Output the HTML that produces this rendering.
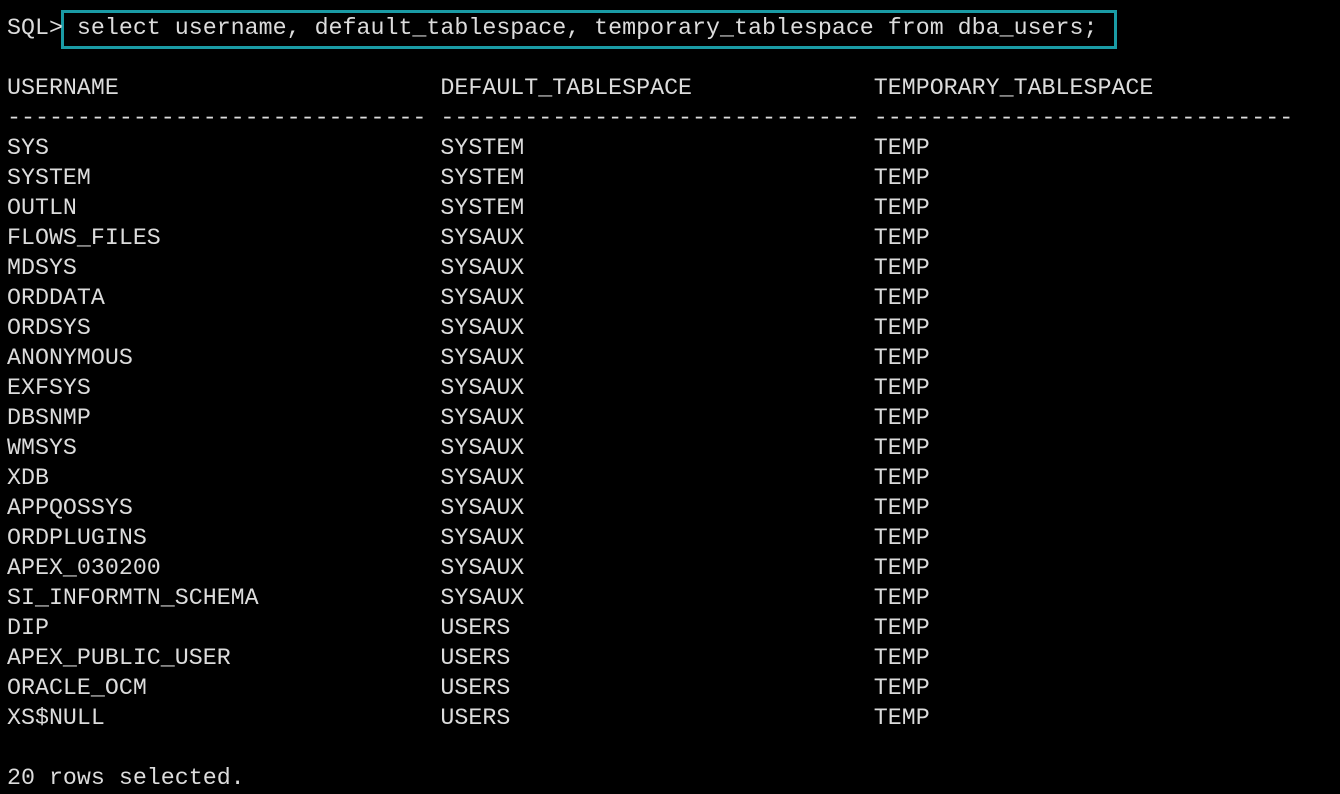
<!DOCTYPE html>
<html><head><style>
html,body{margin:0;padding:0;background:#000;width:1340px;height:794px;overflow:hidden}
pre{margin:0;position:absolute;left:7px;top:13px;font-family:"Liberation Mono",monospace;font-size:23.3px;line-height:30px;color:#dcdcdc;white-space:pre}
.box{position:absolute;left:61px;top:10px;width:1050px;height:33px;border:3px solid #1a9ba5}
</style></head><body>
<div class="box"></div>
<pre>SQL> select username, default_tablespace, temporary_tablespace from dba_users;

USERNAME                       DEFAULT_TABLESPACE             TEMPORARY_TABLESPACE
------------------------------ ------------------------------ ------------------------------
SYS                            SYSTEM                         TEMP
SYSTEM                         SYSTEM                         TEMP
OUTLN                          SYSTEM                         TEMP
FLOWS_FILES                    SYSAUX                         TEMP
MDSYS                          SYSAUX                         TEMP
ORDDATA                        SYSAUX                         TEMP
ORDSYS                         SYSAUX                         TEMP
ANONYMOUS                      SYSAUX                         TEMP
EXFSYS                         SYSAUX                         TEMP
DBSNMP                         SYSAUX                         TEMP
WMSYS                          SYSAUX                         TEMP
XDB                            SYSAUX                         TEMP
APPQOSSYS                      SYSAUX                         TEMP
ORDPLUGINS                     SYSAUX                         TEMP
APEX_030200                    SYSAUX                         TEMP
SI_INFORMTN_SCHEMA             SYSAUX                         TEMP
DIP                            USERS                          TEMP
APEX_PUBLIC_USER               USERS                          TEMP
ORACLE_OCM                     USERS                          TEMP
XS$NULL                        USERS                          TEMP

20 rows selected.</pre>
</body></html>
